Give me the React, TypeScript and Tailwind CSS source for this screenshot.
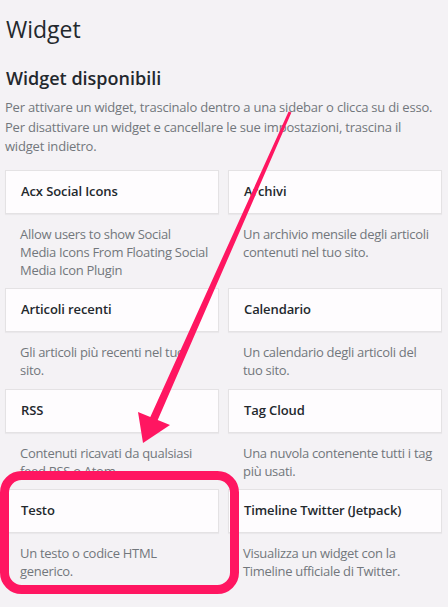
type WidgetItem = {
  title: string;
  description: string;
};

const widgets: WidgetItem[] = [
  {
    title: "Acx Social Icons",
    description: "Allow users to show Social\nMedia Icons From Floating Social Media Icon Plugin",
  },
  { title: "Archivi", description: "Un archivio mensile degli articoli contenuti nel tuo sito." },
  { title: "Articoli recenti", description: "Gli articoli più recenti nel tuo sito." },
  { title: "Calendario", description: "Un calendario degli articoli del tuo sito." },
  { title: "RSS", description: "Contenuti ricavati da qualsiasi feed RSS o Atom." },
  { title: "Tag Cloud", description: "Una nuvola contenente tutti i tag più usati." },
  { title: "Testo", description: "Un testo o codice HTML generico." },
  {
    title: "Timeline Twitter (Jetpack)",
    description: "Visualizza un widget con la Timeline ufficiale di Twitter.",
  },
];

function WidgetCard({ item }: { item: WidgetItem }) {
  return (
    <div>
      <div className="flex h-[44px] items-center border border-[#e4e2e4] bg-[#fefcfe] px-[15px] text-[13px] font-semibold tracking-[-0.1px] text-[#23282d] shadow-[0_1px_1px_rgba(0,0,0,0.04)]">
        {item.title}
      </div>
      <p className="mt-[11px] whitespace-pre-line pl-[15px] pr-[8px] text-[13px] leading-[18px] tracking-[-0.3px] text-[#72777c]">
        {item.description}
      </p>
    </div>
  );
}

export default function App() {
  return (
    <div className="relative min-h-screen w-[448px] overflow-hidden bg-[#f4f2f5] font-['Open_Sans',sans-serif]">
      <div className="px-[5px] pt-[14px]">
        <h1 className="pl-[1px] text-[23px] font-normal leading-[30px] text-[#23282d]">Widget</h1>
        <h2 className="mt-[22px] pl-[1px] text-[18px] font-semibold leading-[24px] text-[#23282d]">
          Widget disponibili
        </h2>
        <p className="mt-[8px] text-[13px] leading-[19.5px] tracking-[-0.2px] text-[#72777c]">
          Per attivare un widget, trascinalo dentro a una sidebar o clicca su di esso. Per disattivare un widget e
          cancellare le sue impostazioni, trascina il widget indietro.
        </p>
        <div className="mt-[13px] grid w-[437px] grid-cols-2 gap-x-[9px] gap-y-[9.5px]">
          {widgets.map((w) => (
            <WidgetCard key={w.title} item={w} />
          ))}
        </div>
      </div>

      {/* annotation: arrow + highlight around "Testo" */}
      <svg className="pointer-events-none absolute inset-0" width="448" height="607" viewBox="0 0 448 607">
        <polygon
          points="288.6,111.4 291.4,112.6 157.7,420.1 170,425 143,443 138,412 150.3,416.9"
          fill="#ff1661"
        />
        <rect x="4.5" y="475.5" width="230" height="114" rx="17" fill="none" stroke="#ff1661" strokeWidth="9" />
      </svg>
    </div>
  );
}
